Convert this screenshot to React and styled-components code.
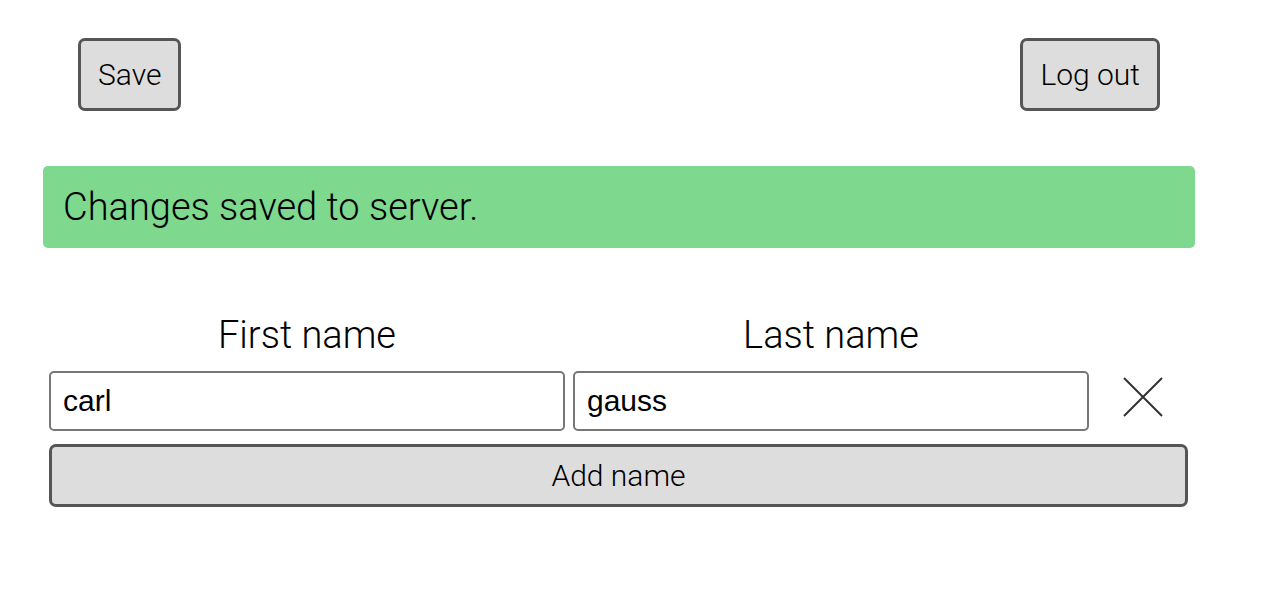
import React, {useState} from 'react';
import styled, {createGlobalStyle} from 'styled-components';

const Global = createGlobalStyle`
  body {
    margin: 0;
    background: #fff;
    font-family: Roboto, "Liberation Sans", sans-serif;
    font-weight: 300;
    color: #000;
  }
`

const Page = styled.div`
  width: 1152px;
  margin-left: 43px;
  padding-top: 38px;
`

const Toolbar = styled.div`
  display: flex;
  justify-content: space-between;
  padding: 0 35px;
`

const Button = styled.button`
  box-sizing: border-box;
  height: ${p => p.$height || 73}px;
  padding: 0 17px;
  background: #dddddd;
  border: 3px solid #555555;
  border-radius: 7px;
  font-family: Roboto, "Liberation Sans", sans-serif;
  font-weight: 300;
  font-size: 30px;
  color: #000;
  cursor: pointer;
`

const Banner = styled.div`
  box-sizing: border-box;
  margin-top: 55px;
  height: 82px;
  padding: 0 20px;
  display: flex;
  align-items: center;
  background: #7ed98e;
  border-radius: 5px;
  font-size: 38px;
`

const Names = styled.div`
  margin-top: 64px;
  margin-left: 6px;
  display: grid;
  grid-template-columns: 516px 516px 91px;
  column-gap: 8px;
  row-gap: 13px;
  align-items: center;
`

const Heading = styled.div`
  text-align: center;
  font-size: 38px;
  line-height: 46px;
`

const Input = styled.input`
  box-sizing: border-box;
  width: 100%;
  height: 60px;
  padding: 0 12px;
  border: 2px solid #777777;
  border-radius: 5px;
  font-family: "Liberation Sans", Arial, sans-serif;
  font-size: 30px;
  color: #000;
  outline: none;
`

const Remove = styled.button`
  justify-self: center;
  width: 44px;
  height: 44px;
  margin-bottom: 8px;
  padding: 0;
  border: none;
  background: none;
  display: flex;
  align-items: center;
  justify-content: center;
  cursor: pointer;
`

const Wide = styled.div`
  grid-column: 1 / -1;
  display: flex;
`

const App = () => {
  let [names, setNames] = useState([{first: 'carl', last: 'gauss'}])

  let change = (i, key, value) => {
    setNames(names.map((n, j) => j === i ? {...n, [key]: value} : n))
  }

  return (
    <>
      <Global/>
      <Page>
        <Toolbar>
          <Button>Save</Button>
          <Button>Log out</Button>
        </Toolbar>

        <Banner>Changes saved to server.</Banner>

        <Names>
          <Heading>First name</Heading>
          <Heading>Last name</Heading>
          <div/>
          {names.map((n, i) => (
            <React.Fragment key={i}>
              <Input value={n.first} onChange={e => change(i, 'first', e.target.value)}/>
              <Input value={n.last} onChange={e => change(i, 'last', e.target.value)}/>
              <Remove onClick={() => setNames(names.filter((_, j) => j !== i))}>
                <svg width="40" height="40" viewBox="0 0 40 40">
                  <path d="M1 1 L39 39 M39 1 L1 39" stroke="#333" strokeWidth="2" fill="none"/>
                </svg>
              </Remove>
            </React.Fragment>
          ))}
          <Wide>
            <Button $height={63} style={{width: '100%'}}
                    onClick={() => setNames([...names, {first: '', last: ''}])}>
              Add name
            </Button>
          </Wide>
        </Names>
      </Page>
    </>
  );
};

export default App;
